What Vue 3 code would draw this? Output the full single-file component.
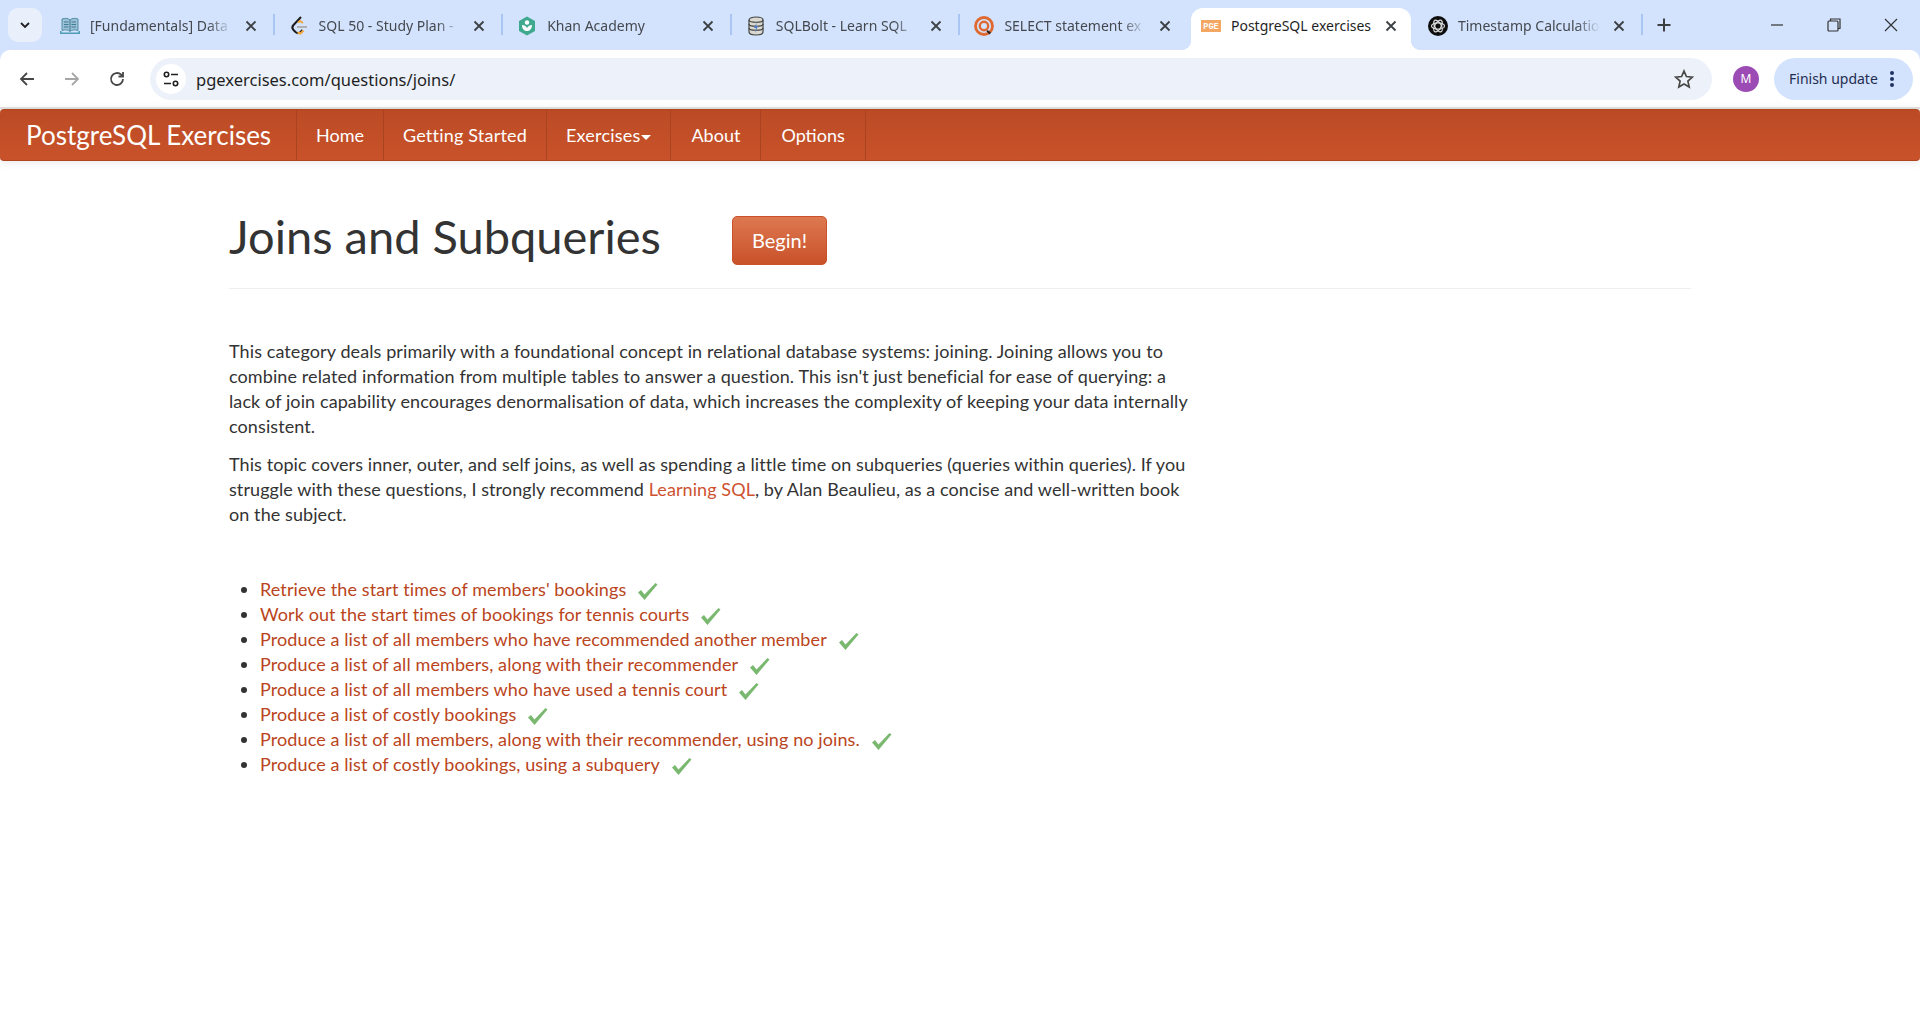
<template>
  <div class="page">
    <div class="chrome">
      <div class="tabstrip">
        <button class="tab-search">
          <svg width="14" height="14" viewBox="0 0 14 14"><path d="M3 5l4 4 4-4" fill="none" stroke="#1f1f1f" stroke-width="1.8"/></svg>
        </button>
        <div v-for="tab in tabs" :key="tab.title" class="tab" :class="{ active: tab.active, nosep: tab.nosep }">
          <span class="favicon">
            <svg v-if="tab.icon === 'book'" width="20" height="20" viewBox="0 0 20 20">
              <path d="M0 15h1.500v1.500h17V15H20v3H0z" fill="#4f9db5"/>
              <path d="M2 3c3-1 6-1 8 1 2-2 5-2 8-1v11.500c-3-1-6-1-8 1-2-2-5-2-8-1z" fill="#9cc0d4" stroke="#4f8ea8"/>
              <path d="M10 4v11M4 6h4.500M4 8.500h4.500M4 11h4.500M11.500 6H16M11.500 8.500H16M11.500 11H16" stroke="#3d7b96"/>
            </svg>
            <svg v-else-if="tab.icon === 'leet'" width="20" height="20" viewBox="0 0 20 20">
              <path d="M12 1L4.500 9c-1.500 1.600-1.500 3.400 0 5l2 2c1.600 1.500 3.400 1.500 5 0l2-2" fill="none" stroke="#1a1a1a" stroke-width="2"/>
              <path d="M8 11h10" stroke="#b0b0b0" stroke-width="2"/>
              <path d="M9 6.500l2-1.500 3 2M8.500 16.500l3 1 3-3" fill="none" stroke="#f0a63c" stroke-width="2"/>
            </svg>
            <svg v-else-if="tab.icon === 'khan'" width="20" height="20" viewBox="0 0 20 20">
              <path d="M10 0.500l8 4.500v10l-8 4.500-8-4.500v-10z" fill="#3fa98f"/>
              <circle cx="10" cy="6.500" r="2.200" fill="#fff"/>
              <path d="M5 9c0 4 2.500 6 5 6s5-2 5-6c-2 0-4 1-5 3-1-2-3-3-5-3z" fill="#fff"/>
            </svg>
            <svg v-else-if="tab.icon === 'bolt'" width="20" height="20" viewBox="0 0 20 20">
              <path d="M3 4c0-4 14-4 14 0v12c0 4-14 4-14 0z" fill="#d9d9d2" stroke="#444" stroke-width="1.200"/>
              <path d="M3 4c0 3 14 3 14 0M3 8c0 3 14 3 14 0M3 12c0 3 14 3 14 0" fill="none" stroke="#444" stroke-width="1.200"/>
              <path d="M11 6l-3 6h2l-1 5 3-7h-2z" fill="#4a78c8"/>
            </svg>
            <svg v-else-if="tab.icon === 'target'" width="20" height="20" viewBox="0 0 20 20">
              <circle cx="10" cy="10" r="8.500" fill="none" stroke="#e0692f" stroke-width="2.800"/>
              <circle cx="10" cy="10" r="4.200" fill="none" stroke="#e0692f" stroke-width="2.400"/>
              <path d="M13.500 14l3.500 2.500-1.500 2-3-3z" fill="#222"/>
            </svg>
            <svg v-else-if="tab.icon === 'pge'" width="20" height="20" viewBox="0 0 20 20">
              <rect y="4" width="20" height="12" fill="#f3a763"/>
              <text x="10" y="13" text-anchor="middle" class="pge-text">PGE</text>
            </svg>
            <svg v-else width="20" height="20" viewBox="0 0 20 20">
              <circle cx="10" cy="10" r="10" fill="#0d0d0d"/>
              <g fill="none" stroke="#ddd" stroke-width="1.200">
                <ellipse cx="10" cy="10" rx="6.500" ry="3.200"/>
                <ellipse cx="10" cy="10" rx="6.500" ry="3.200" transform="rotate(60 10 10)"/>
                <ellipse cx="10" cy="10" rx="6.500" ry="3.200" transform="rotate(120 10 10)"/>
              </g>
            </svg>
          </span>
          <span class="tab-title">{{ tab.title }}</span>
          <svg class="tab-close" width="12" height="12" viewBox="0 0 12 12"><path d="M1.500 1.500l9 9M10.500 1.500l-9 9" stroke="#3c4043" stroke-width="1.800"/></svg>
        </div>
        <svg class="new-tab" width="16" height="16" viewBox="0 0 16 16"><path d="M8 1.500v13M1.500 8h13" stroke="#3c4043" stroke-width="2"/></svg>
        <div class="window-btns">
          <svg width="14" height="14" viewBox="0 0 14 14"><path d="M1 7h12" stroke="#333" stroke-width="1.200"/></svg>
          <svg width="14" height="14" viewBox="0 0 14 14"><rect x="1" y="3" width="10" height="10" rx="1" fill="none" stroke="#333" stroke-width="1.200"/><path d="M3.500 3V1h9.500v9.500h-2" fill="none" stroke="#333" stroke-width="1.200"/></svg>
          <svg width="14" height="14" viewBox="0 0 14 14"><path d="M1 1l12 12M13 1L1 13" stroke="#333" stroke-width="1.200"/></svg>
        </div>
      </div>

      <div class="toolbar">
        <svg class="nav-icon" width="18" height="18" viewBox="0 0 18 18"><path d="M16 9H3M9 3L3 9l6 6" fill="none" stroke="#474747" stroke-width="1.800"/></svg>
        <svg class="nav-icon" width="18" height="18" viewBox="0 0 18 18"><path d="M2 9h13M9 3l6 6-6 6" fill="none" stroke="#a6a6a6" stroke-width="1.800"/></svg>
        <svg class="nav-icon" width="18" height="18" viewBox="0 0 18 18"><path d="M15 9a6 6 0 1 1-1.800-4.300L15 6.500M15 2v4.500h-4.500" fill="none" stroke="#474747" stroke-width="1.800"/></svg>
        <div class="omnibox">
          <span class="site-info">
            <svg width="18" height="18" viewBox="0 0 18 18" fill="none" stroke="#1f1f1f" stroke-width="1.600">
              <circle cx="4.500" cy="4.500" r="2.200"/><path d="M9 4.500h7M2 13.500h7"/><circle cx="13.500" cy="13.500" r="2.200"/>
            </svg>
          </span>
          <span class="url">pgexercises.com/questions/joins/</span>
          <svg class="star" width="20" height="20" viewBox="0 0 20 20"><path d="M10 2l2.400 5.500 6 .6-4.500 4 1.300 5.900L10 15l-5.200 3 1.300-5.900-4.500-4 6-.6z" fill="none" stroke="#474747" stroke-width="1.700"/></svg>
        </div>
        <span class="avatar">M</span>
        <div class="update-pill">
          <span>Finish update</span>
          <svg width="4" height="18" viewBox="0 0 4 18" fill="#1f3260"><circle cx="2" cy="3" r="2"/><circle cx="2" cy="9" r="2"/><circle cx="2" cy="15" r="2"/></svg>
        </div>
      </div>
    </div>

    <nav class="navbar">
      <a class="brand">PostgreSQL Exercises</a>
      <ul class="nav">
        <li>Home</li>
        <li class="wide">Getting Started</li>
        <li class="wide">Exercises<span class="caret"></span></li>
        <li>About</li>
        <li>Options</li>
      </ul>
    </nav>

    <main class="container">
      <div class="page-header">
        <h1>Joins and Subqueries</h1>
        <button class="begin">Begin!</button>
      </div>

      <div class="intro">
        <p>This category deals primarily with a foundational concept in relational database systems: joining. Joining allows you to<br>combine related information from multiple tables to answer a question. This isn't just beneficial for ease of querying: a<br>lack of join capability encourages denormalisation of data, which increases the complexity of keeping your data internally<br>consistent.</p>
        <p>This topic covers inner, outer, and self joins, as well as spending a little time on subqueries (queries within queries). If you<br>struggle with these questions, I strongly recommend <a>Learning SQL</a>, by Alan Beaulieu, as a concise and well-written book<br>on the subject.</p>
      </div>

      <ul class="questions">
        <li v-for="q in questions" :key="q">
          <a>{{ q }}</a>
          <svg class="check" width="21" height="19" viewBox="0 0 21 19"><path d="M1 10.500l3-2.500 3.500 4.500L18.500 1l2 1.500L7.500 18z" fill="#7ab870"/></svg>
        </li>
      </ul>
    </main>
  </div>
</template>

<script setup>
// titles are what the strip shows before it fades them out
const tabs = [
  { title: '[Fundamentals] Data', icon: 'book' },
  { title: 'SQL 50 - Study Plan -', icon: 'leet' },
  { title: 'Khan Academy', icon: 'khan' },
  { title: 'SQLBolt - Learn SQL', icon: 'bolt' },
  { title: 'SELECT statement ex', icon: 'target', nosep: true },
  { title: 'PostgreSQL exercises', icon: 'pge', active: true, nosep: true },
  { title: 'Timestamp Calculatio', icon: 'gpt' }
]

const questions = [
  "Retrieve the start times of members' bookings",
  'Work out the start times of bookings for tennis courts',
  'Produce a list of all members who have recommended another member',
  'Produce a list of all members, along with their recommender',
  'Produce a list of all members who have used a tennis court',
  'Produce a list of costly bookings',
  'Produce a list of all members, along with their recommender, using no joins.',
  'Produce a list of costly bookings, using a subquery'
]
</script>

<style scoped>
.page {
  font-family: Lato, "Open Sans", sans-serif;
  font-size: 18px;
  line-height: 25px;
  letter-spacing: .1px;
  color: #333;
  background: #fff;
  min-height: 1030px;
}

/* browser chrome */
.chrome {
  background: #d3e3fd;
  letter-spacing: 0;
}
.tabstrip {
  height: 50px;
  display: flex;
  align-items: center;
  padding-left: 8px;
  font-family: "Noto Sans", sans-serif;
  font-size: 14px;
}
.tab-search {
  width: 34px;
  height: 34px;
  margin-right: 4px;
  border: 0;
  border-radius: 10px;
  background: #e9f0fc;
  display: flex;
  align-items: center;
  justify-content: center;
  padding: 0;
}
.tab {
  position: relative;
  width: 228.600px;
  height: 42px;
  margin-top: 8px;
  padding: 0 18px 0 14px;
  box-sizing: border-box;
  display: flex;
  align-items: center;
  gap: 10px;
  color: #45494f;
}
.tab::after {
  content: "";
  position: absolute;
  right: 0;
  top: 6px;
  height: 21px;
  width: 2px;
  background: #a9c5f2;
}
.tab.nosep::after {
  display: none;
}
.tab.active {
  background: #fff;
  border-radius: 12px 12px 0 0;
  color: #1f1f1f;
  margin: 8px 3px 0 2px;
  padding: 0 14px 0 10px;
  width: 220px;
}
/* the two small flares at the foot of the open tab */
.tab.active::before,
.tab.active::after {
  content: "";
  display: block;
  position: absolute;
  top: auto;
  bottom: 0;
  width: 10px;
  height: 10px;
}
.tab.active::before {
  left: -10px;
  background: radial-gradient(circle at 0 0, transparent 10px, #fff 10.500px);
}
.tab.active::after {
  right: -10px;
  background: radial-gradient(circle at 100% 0, transparent 10px, #fff 10.500px);
}
.favicon {
  width: 20px;
  height: 20px;
  flex: none;
  margin-top: -6px;
}
.pge-text {
  font-family: "Liberation Mono", monospace;
  font-size: 8.500px;
  font-weight: bold;
  fill: #fff;
}
.tab-title {
  flex: 1;
  white-space: nowrap;
  overflow: hidden;
  margin-top: -8px;
  -webkit-mask-image: linear-gradient(to right, #000 118px, transparent 142px);
  mask-image: linear-gradient(to right, #000 118px, transparent 142px);
}
.tab.active .tab-title {
  -webkit-mask-image: none;
  mask-image: none;
}
.tab-close {
  flex: none;
  margin-top: -6px;
}
.new-tab {
  margin-left: 13px;
}
.window-btns {
  margin-left: auto;
  display: flex;
  gap: 43px;
  padding-right: 22px;
}
.toolbar {
  height: 57px;
  background: #fff;
  border-bottom: 2px solid #e3e3e3;
  border-radius: 10px 10px 0 0;
  display: flex;
  align-items: center;
  padding-left: 18px;
  font-family: "Noto Sans", sans-serif;
  font-size: 15px;
}
.nav-icon {
  margin-right: 27px;
}
.omnibox {
  width: 1562px;
  height: 42px;
  margin-left: -3px;
  border-radius: 21px;
  background: #edf2fa;
  display: flex;
  align-items: center;
  padding: 0 18px 0 6px;
  box-sizing: border-box;
}
.site-info {
  width: 30px;
  height: 30px;
  border-radius: 50%;
  background: #fff;
  display: flex;
  align-items: center;
  justify-content: center;
  margin-right: 10px;
}
.url {
  flex: 1;
  color: #1f1f1f;
  font-size: 16.500px;
  margin-top: 2px;
}
.avatar {
  width: 26px;
  height: 26px;
  margin-left: 21px;
  border-radius: 50%;
  background: #9c4bb5;
  color: #fff;
  font-size: 12px;
  line-height: 26px;
  text-align: center;
}
.update-pill {
  width: 139px;
  height: 42px;
  margin-left: 15px;
  border-radius: 21px;
  background: #d3e3fd;
  color: #1f2d50;
  font-size: 14px;
  display: flex;
  align-items: center;
  justify-content: space-between;
  padding: 0 19px 0 15px;
  box-sizing: border-box;
}

/* site navbar */
.navbar {
  height: 50px;
  background: linear-gradient(#bb4b25, #c9522a);
  border: 1px solid #b0441f;
  border-width: 1px 0;
  border-radius: 4px;
  display: flex;
  box-shadow: 0 1px 10px rgba(0, 0, 0, .1);
  color: #fff;
  letter-spacing: 0;
}
.brand {
  font-size: 26px;
  line-height: 50px;
  padding-left: 26px;
  width: 296px;
  box-sizing: border-box;
  white-space: nowrap;
}
.nav {
  list-style: none;
  margin: 0;
  padding: 0;
  display: flex;
  border-left: 1px solid #a94320;
}
.nav li {
  line-height: 50px;
  padding: 0 20px;
  border-right: 1px solid #a94320;
}
.nav li:first-child {
  padding: 0 19px;
}
.nav li.wide {
  letter-spacing: .2px;
  padding: 0 19px;
}
.caret {
  display: inline-block;
  margin-left: 1px;
  vertical-align: middle;
  border-top: 5px solid #fff;
  border-left: 5px solid transparent;
  border-right: 5px solid transparent;
}

/* content */
.container {
  width: 1462px;
  margin-left: 229px;
}
.page-header {
  height: 128px;
  padding-top: 50px;
  border-bottom: 1px solid #eee;
  display: flex;
  align-items: flex-start;
  gap: 73px;
  box-sizing: border-box;
}
.page-header h1 {
  margin: 0;
  font-size: 47px;
  font-weight: 400;
  line-height: 50px;
  letter-spacing: 0;
  width: 430px;
  white-space: nowrap;
}
.begin {
  width: 95px;
  height: 49px;
  margin-top: 5px;
  border: 1px solid #c9522a;
  border-radius: 5px;
  background: linear-gradient(#dd7850, #c9522a);
  color: #fff;
  font: inherit;
  font-size: 20px;
}
.intro {
  width: 975px;
  margin-top: 50px;
}
.intro p {
  margin: 0 0 12.500px;
}
.intro p + p {
  letter-spacing: .08px;
}
.intro a {
  color: #ce5230;
}
.questions {
  margin: 50px 0 0;
  padding: 0 0 0 31px;
}
.questions a {
  color: #ba4420;
}
.questions li {
  height: 25px;
}
.check {
  margin-left: 11px;
  vertical-align: -5px;
}
</style>

<style>
body {
  margin: 0;
  background: #fff;
}
</style>
